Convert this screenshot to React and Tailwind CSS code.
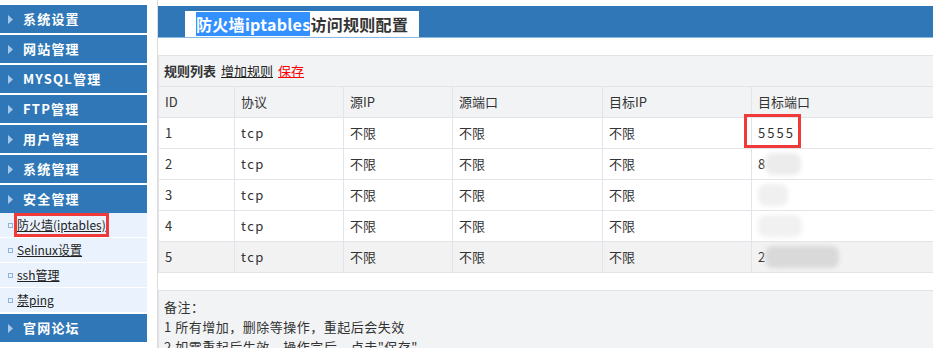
import React from "react";

const menus = ["系统设置", "网站管理", "MYSQL管理", "FTP管理", "用户管理", "系统管理", "安全管理"];
const subs = ["防火墙(iptables)", "Selinux设置", "ssh管理", "禁ping"];

const rows = [
  { id: 1, port: "5555", mark: true },
  { id: 2, port: "8", blur: "w-[36px] bg-[#ececec]" },
  { id: 3, port: "", blur: "w-[30px] bg-[#f0f0f0]" },
  { id: 4, port: "", blur: "w-[44px] bg-[#f1f1f1]" },
  { id: 5, port: "2", blur: "w-[74px] bg-[#d9d9d9]", gray: true },
];

const cols = [
  { label: "ID", w: "w-[76px]" },
  { label: "协议", w: "w-[109px]" },
  { label: "源IP", w: "w-[109px]" },
  { label: "源端口", w: "w-[150px]" },
  { label: "目标IP", w: "w-[149px]" },
  { label: "目标端口", w: "flex-1" },
];

const Arrow = () => (
  <svg width="5" height="9" viewBox="0 0 5 9" className="shrink-0">
    <path d="M0 0 L5 4.5 L0 9 Z" fill="#a8c8ea" />
  </svg>
);

const MenuItem = ({ label }) => (
  <div className="h-[28px] mb-[2px] bg-[#2f77b6] flex items-center pl-[8px] gap-[10px]">
    <Arrow />
    <span className="text-white text-[13px] font-bold tracking-[1.2px]">{label}</span>
  </div>
);

const Cell = ({ w, children, last }) => (
  <div
    className={`${w} h-full flex items-center pl-[6px] ${
      last ? "" : "border-r border-[#e1e4e9]"
    }`}
  >
    {children}
  </div>
);

const App = () => {
  return (
    <div
      className="w-[933px] h-[348px] overflow-hidden bg-white flex text-[13px] text-[#333]"
      style={{ fontFamily: '"Microsoft YaHei", "Noto Sans CJK SC", sans-serif' }}
    >
      <div className="w-[147px] shrink-0 pt-[5px]">
        {menus.map((m) => (
          <MenuItem key={m} label={m} />
        ))}
        <div className="-mt-[2px] mb-[1px]">
          {subs.map((s, i) => (
            <div
              key={s}
              className="h-[25px] bg-[#eaf3fd] border-b border-white flex items-center pl-[8px] gap-[4px]"
            >
              <span className="w-[5px] h-[5px] border border-[#8fb3dc] shrink-0" />
              <span
                className={`underline text-[#222] text-[12px] ${
                  i === 0 ? "outline-[3px] outline-solid outline-[#f03a3a]" : ""
                }`}
              >
                {s}
              </span>
            </div>
          ))}
        </div>
        <MenuItem label="官网论坛" />
      </div>

      <div className="flex-1 ml-[10px] border-l border-[#dcdcdc] flex flex-col">
        <div className="pt-[6px]">
          <div className="h-[32px] bg-[#2f77b6] border-b border-[#8ab8e4] flex items-end pl-[27px]">
            <div className="h-[26px] w-[234px] bg-white flex items-center pl-[11px] text-[16px] font-bold text-[#333] tracking-[0.3px]">
              <span className="bg-[#3390ff] text-white">防火墙iptables</span>
              <span>访问规则配置</span>
            </div>
          </div>
        </div>

        <div className="mt-[17px] border-t border-l border-[#dfe2e7] bg-[#f2f3f5]">
          <div className="h-[31px] flex items-center pl-[5px] gap-[5px] border-b border-[#e1e4e9]">
            <span className="font-bold">规则列表</span>
            <span className="underline text-[#222]">增加规则</span>
            <span className="underline text-[#f00]">保存</span>
          </div>
          <div className="h-[31px] flex border-b border-[#e1e4e9]">
            {cols.map((c, i) => (
              <Cell key={c.label} w={c.w} last={i === cols.length - 1}>
                {c.label}
              </Cell>
            ))}
          </div>
          {rows.map((r) => (
            <div
              key={r.id}
              className={`h-[31px] flex border-b border-[#e1e4e9] ${
                r.gray ? "bg-[#f2f2f2]" : "bg-white"
              }`}
            >
              <Cell w="w-[76px]">{r.id}</Cell>
              <Cell w="w-[109px]">
                <span className="tracking-[1.5px]">tcp</span>
              </Cell>
              <Cell w="w-[109px]">不限</Cell>
              <Cell w="w-[150px]">不限</Cell>
              <Cell w="w-[149px]">不限</Cell>
              <Cell w="flex-1" last>
                {r.mark ? (
                  <span className="relative tracking-[2px]">
                    {r.port}
                    <span className="absolute -left-[14px] -top-[9px] w-[57px] h-[34px] border-[3px] border-[#f03a3a]" />
                  </span>
                ) : (
                  <div className="flex items-center">
                    <span>{r.port}</span>
                    <span className={`${r.blur} h-[22px] rounded-[8px] blur-[2px]`} />
                  </div>
                )}
              </Cell>
            </div>
          ))}
        </div>

        <div className="mt-[17px] flex-1 border-t border-l border-[#dfe2e7] bg-[#f2f3f5] pl-[5px] pt-[6px] leading-[20px] tracking-[0.5px]">
          <div>备注：</div>
          <div>1 所有增加，删除等操作，重起后会失效</div>
          <div>2 如需重起后生效，操作完后，点击"保存"</div>
        </div>
      </div>
    </div>
  );
};

export default App;
